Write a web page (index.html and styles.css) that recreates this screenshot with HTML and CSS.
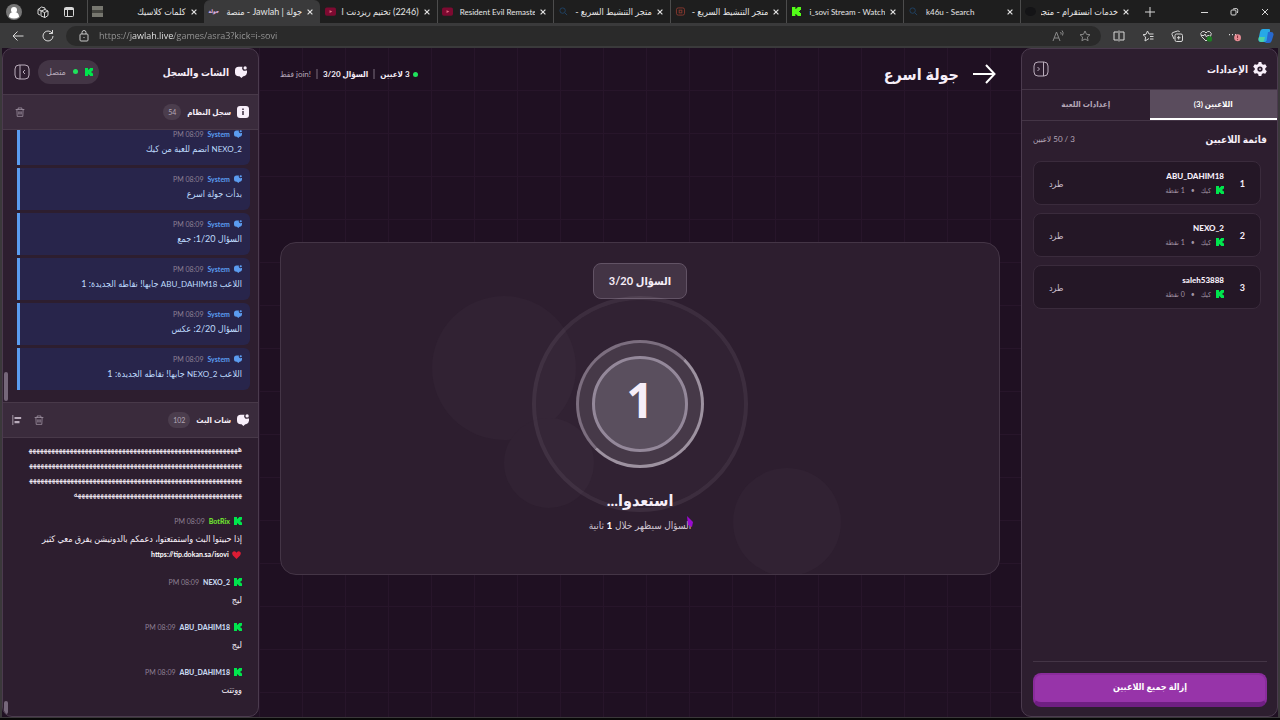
FILE: index.html
```html
<!DOCTYPE html>
<html lang="ar" dir="rtl">
<head>
    <meta charset="UTF-8" />
    <meta name="viewport" content="width=device-width, initial-scale=1.0" />
    <title>جولة | Jawlah - منصة</title>
    <link rel="stylesheet" href="styles.css">
</head>
<body>

    <!-- Shared icons -->
    <svg class="sprite" aria-hidden="true">
        <symbol id="kick" viewBox="0 0 9 9">
            <path d="M0 0h3.400v2h1V1h1V0H9v3H8v1H7v1h1v1h1v3H5.400V8h-1V7h-1v2H0z" />
        </symbol>
        <symbol id="bubble" viewBox="0 0 16 16">
            <path d="M5 1h5a3.500 3.500 0 0 0 4.500 5H16v3a5 5 0 0 1-4 4.500h-1L8.500 16 6 13.500H5a5 5 0 0 1-5-5V6a5 5 0 0 1 5-5z" />
            <circle cx="13.500" cy="2.500" r="2.200" />
        </symbol>
        <symbol id="trash" viewBox="0 0 16 16">
            <path d="M1 4h14M5 4V1.500h6V4M3 4l.5 11h9L13 4M6 7v5M8 7v5M10 7v5" />
        </symbol>
        <symbol id="close" viewBox="0 0 10 10">
            <path d="M1 1l8 8M9 1l-8 8" />
        </symbol>
        <symbol id="search" viewBox="0 0 10 10">
            <circle cx="4" cy="4" r="3" />
            <path d="M6.500 6.500L9 9" />
        </symbol>
        <symbol id="youtube" viewBox="0 0 12 9">
            <rect width="12" height="9" rx="2" fill="#7d0a31" />
            <path d="M5 3l3 1.500L5 6z" fill="#e06a80" />
        </symbol>
    </svg>

    <header class="browser" dir="ltr">
        <div class="tab-strip">
            <div class="strip-tools">
                <button class="avatar" aria-label="Profile"><svg viewBox="0 0 16 16"><circle cx="8" cy="8" r="8" fill="#777" /><circle cx="8" cy="6" r="3" fill="#fff" /><path d="M3 13q0-5 5-5t5 5q-5 3-10 0z" fill="#fff" /></svg></button>
                <button class="line-icon" aria-label="Workspaces"><svg viewBox="0 0 12 12"><path d="M1 3.500L4.500 1 8 2v2M1 3.500V8l2 1M1 3.500l3 1M4 5l4-1.500L11 5v4.500L8 11.500 4 10zM4 5l3.500 1.500L11 5M7.500 6.500v5" /></svg></button>
                <button class="line-icon" aria-label="Tab actions"><svg viewBox="0 0 12 12"><rect x="1.500" y="1.500" width="9" height="9" rx="1" /><path d="M1.500 3h9" stroke-width="2" /><path d="M4.500 3v7" /></svg></button>
            </div>
            <div class="tabs">
                <div class="tab"><span class="favicon gray-page"></span><span class="tab-title" dir="rtl">كلمات كلاسيك</span><button class="tab-close" aria-label="Close"><svg><use href="#close" /></svg></button></div>
                <div class="tab active"><span class="favicon word-mark">جولة</span><span class="tab-title" dir="rtl">جولة | Jawlah - منصة</span><button class="tab-close" aria-label="Close"><svg><use href="#close" /></svg></button></div>
                <div class="tab no-line"><svg class="favicon"><use href="#youtube" /></svg><span class="tab-title" dir="rtl">(2246) تختيم ريزدنت اي</span><button class="tab-close" aria-label="Close"><svg><use href="#close" /></svg></button></div>
                <div class="tab"><svg class="favicon"><use href="#youtube" /></svg><span class="tab-title latin">Resident Evil Remaste</span><button class="tab-close" aria-label="Close"><svg><use href="#close" /></svg></button></div>
                <div class="tab"><svg class="favicon lens"><use href="#search" /></svg><span class="tab-title" dir="rtl">متجر التنشيط السريع -</span><button class="tab-close" aria-label="Close"><svg><use href="#close" /></svg></button></div>
                <div class="tab"><svg class="favicon store" viewBox="0 0 11 10"><rect x="1" y="1" width="9" height="8" rx="2" /><rect x="4" y="3.500" width="3" height="3" /></svg><span class="tab-title" dir="rtl">متجر التنشيط السريع -</span><button class="tab-close" aria-label="Close"><svg><use href="#close" /></svg></button></div>
                <div class="tab"><svg class="favicon kick-lime"><use href="#kick" /></svg><span class="tab-title latin">i_sovi Stream - Watch</span><button class="tab-close" aria-label="Close"><svg><use href="#close" /></svg></button></div>
                <div class="tab"><svg class="favicon lens"><use href="#search" /></svg><span class="tab-title latin">k46u - Search</span><button class="tab-close" aria-label="Close"><svg><use href="#close" /></svg></button></div>
                <div class="tab"><span class="favicon dark-page"></span><span class="tab-title" dir="rtl">خدمات انستقرام - متجر</span><button class="tab-close" aria-label="Close"><svg><use href="#close" /></svg></button></div>
            </div>
            <div class="window-tools">
                <button class="line-icon" aria-label="New tab"><svg viewBox="0 0 12 12"><path d="M6 1v10M1 6h10" /></svg></button>
                <span class="spacer"></span>
                <button class="line-icon" aria-label="Minimize"><svg viewBox="0 0 12 12"><path d="M3 6.500h7" /></svg></button>
                <button class="line-icon" aria-label="Restore"><svg viewBox="0 0 12 12"><rect x="3" y="4" width="5" height="5" rx="1" /><path d="M5 3q4-1 4.500 0T9.500 7" /></svg></button>
                <button class="line-icon" aria-label="Close window"><svg viewBox="0 0 12 12"><path d="M3 3l6 6M9 3L3 9" /></svg></button>
            </div>
        </div>

        <div class="toolbar">
            <button class="line-icon" aria-label="Back"><svg viewBox="0 0 12 12"><path d="M11.500 6H1M5.500 1.500L1 6l4.500 4.500" /></svg></button>
            <button class="line-icon" aria-label="Refresh"><svg viewBox="0 0 12 12"><path d="M11 6a5 5 0 1 1-2-4l1.500 1.500M10.500 0v3.500H7" /></svg></button>
            <div class="address">
                <svg class="lock" viewBox="0 0 12 12"><rect x="2" y="4" width="8" height="7" rx="1" /><path d="M4 4V2.500a2 2 0 0 1 4 0V4M6 7v1" /></svg>
                <input class="url" type="text" aria-label="Address" value="https://jawlah.live/games/asra3?kick=i-sovi" />
                <button class="line-icon dim" aria-label="Read aloud"><svg viewBox="0 0 12 12"><path d="M1 11l3.500-9L8 11M2.200 8h4.600M8.500 2q1 1 .5 2.500M10 .5q2 2 .5 5" /></svg></button>
                <button class="line-icon dim" aria-label="Add to favorites"><svg viewBox="0 0 12 12"><path d="M6 1l1.500 3.300 3.500.4-2.600 2.400.7 3.600L6 9l-3.100 1.700.7-3.600L1 4.700l3.500-.4z" /></svg></button>
            </div>
            <div class="toolbar-icons">
                <button class="line-icon" aria-label="Split screen"><svg viewBox="0 0 12 12"><path d="M5 2H1v8h4M7 2h4v8H7M6 .5v11" /></svg></button>
                <button class="line-icon" aria-label="Favorites"><svg viewBox="0 0 12 12"><path d="M7 8.500L3 11l.6-4L1 4.700l3-.4L5.500 1 7 4h4.500M8 6.500h3.500M8 9h3.500" /></svg></button>
                <button class="line-icon" aria-label="Collections"><svg viewBox="0 0 12 12"><rect x="4" y="4" width="7.500" height="7.500" rx="1.500" /><path d="M3 9L1 4.500Q.5 3 2 2.500L6.500 1Q8 .5 8.500 2M7.700 6v3.500M6 7.700h3.500" /></svg></button>
                <button class="line-icon" aria-label="Browser essentials"><svg viewBox="0 0 12 12"><path d="M6 11L1.500 6.500Q-.5 3 2.500 1.500 5 1 6 3q1-2 3.500-1.500 3 1.500 1 5zM1 5.500h3l1-1.500 1.500 3 1-1.500h2" /><circle cx="9.500" cy="9" r="2.800" fill="#1d7d22" stroke="none" /></svg></button>
                <button class="line-icon" aria-label="Settings and more"><svg viewBox="0 0 14 12"><path d="M0 4.500h1.200M3.500 4.500h1.200M7 4.500h1.200" stroke-width="1.500" /><circle cx="10" cy="8" r="4" fill="#e58b93" stroke="none" /><path d="M10 5.500v3M10 9.500v1" stroke="#701c28" /></svg></button>
                <button class="copilot" aria-label="Copilot"><svg viewBox="0 0 16 16"><path d="M5 1h6q1.500 0 1 2L10 11q-.7 3-3 3H3q-3 0-2.500-3L2 4q.7-3 3-3z" fill="#27a9e6" /><path d="M10 4h3q3 0 2.500 3L14 12q-.7 3-3 3H6q2 0 2.500-2z" fill="#2769cf" /><path d="M1 9h6l-1 4q-.5 1-2 1Q.5 14 .5 11z" fill="#4fd2a0" /></svg></button>
            </div>
        </div>
    </header>

    <div class="app">
        <!-- Settings panel -->
        <aside class="panel settings">
            <div class="settings-head">
                <svg class="gear" viewBox="0 0 16 16"><path fill-rule="evenodd" d="M6.500 0h3l.6 2.300 1.600.9L14 2.500l1.800 2.800L14 7.100v1.800l1.800 1.800-1.800 2.800-2.300-.7-1.600.9-.6 2.300h-3l-.6-2.300-1.600-.9-2.300.7-1.800-2.800L2 8.900V7.100L.2 5.300 2 2.500l2.300.7 1.600-.9zM8 5a3 3 0 1 0 0 6 3 3 0 0 0 0-6z" /><circle cx="8" cy="8" r="1" /></svg>
                <h2>الإعدادات</h2>
                <button class="collapse" aria-label="طي الإعدادات"><svg viewBox="0 0 16 16"><rect x="1" y="1" width="14" height="14" rx="4" /><path d="M10.500 1v14M4.500 6l2 2-2 2" /></svg></button>
            </div>
            <div class="settings-tabs">
                <button class="settings-tab selected">اللاعبين (3)</button>
                <button class="settings-tab">إعدادات اللعبة</button>
            </div>
            <div class="players">
                <div class="players-head">
                    <h3>قائمة اللاعبين</h3>
                    <span>3 / 50 لاعبين</span>
                </div>
                <ul class="player-list">
                    <li class="player">
                        <b class="rank">1</b>
                        <div class="player-info">
                            <strong>ABU_DAHIM18</strong>
                            <small><svg class="kick"><use href="#kick" /></svg>كيك<i>•</i>1 نقطة</small>
                        </div>
                        <button class="kick-out">طرد</button>
                    </li>
                    <li class="player">
                        <b class="rank">2</b>
                        <div class="player-info">
                            <strong>NEXO_2</strong>
                            <small><svg class="kick"><use href="#kick" /></svg>كيك<i>•</i>1 نقطة</small>
                        </div>
                        <button class="kick-out">طرد</button>
                    </li>
                    <li class="player">
                        <b class="rank">3</b>
                        <div class="player-info">
                            <strong>saleh53888</strong>
                            <small><svg class="kick"><use href="#kick" /></svg>كيك<i>•</i>0 نقطة</small>
                        </div>
                        <button class="kick-out">طرد</button>
                    </li>
                </ul>
            </div>
            <div class="settings-foot">
                <button class="remove-all">إزالة جميع اللاعبين</button>
            </div>
        </aside>

        <!-- Game -->
        <main class="game">
            <div class="game-head">
                <button class="back" aria-label="رجوع"><svg viewBox="0 0 24 20"><path d="M1 10h21M14 1l8.500 9-8.500 9" /></svg></button>
                <h1>جولة اسرع</h1>
                <div class="status">
                    <span class="dot"></span>
                    <b>3 لاعبين</b>
                    <span class="bar"></span>
                    <b>السؤال 3/20</b>
                    <span class="bar"></span>
                    <span class="join"><bdi>join!</bdi> فقط</span>
                </div>
            </div>
            <div class="stage">
                <section class="round-card">
                    <span class="blob blob-large"></span>
                    <span class="blob blob-small"></span>
                    <span class="blob blob-right"></span>
                    <div class="question-no">السؤال 3/20</div>
                    <div class="countdown">
                        <div class="count">1</div>
                    </div>
                    <h2>استعدوا...</h2>
                    <p>السؤال سيظهر خلال <b>1</b> ثانية<svg class="pointer" viewBox="0 0 8 12"><path d="M1 0l6 6-1 5-4-2z" /></svg></p>
                </section>
            </div>
        </main>

        <!-- Chat and log panel -->
        <aside class="panel chat-panel">
            <div class="chat-head">
                <svg class="bubble"><use href="#bubble" /></svg>
                <h2>الشات والسجل</h2>
                <span class="connected"><svg class="kick"><use href="#kick" /></svg><span class="dot"></span>متصل</span>
                <button class="collapse" aria-label="طي الشات"><svg viewBox="0 0 16 16"><rect x="1" y="1" width="14" height="14" rx="4" /><path d="M6 1v14M11 6L9 8l2 2" /></svg></button>
            </div>

            <div class="section-bar">
                <svg class="info" viewBox="0 0 12 12"><rect width="12" height="12" rx="3" fill="#f8effa" /><path d="M6 5v4M6 2.500V4" stroke="#3a2b3c" stroke-width="1.500" /></svg>
                <h3>سجل النظام</h3>
                <span class="badge">54</span>
                <button class="tool" aria-label="مسح السجل"><svg><use href="#trash" /></svg></button>
            </div>
            <div class="feed log">
                <div class="log-item">
                    <div class="meta"><svg class="bubble"><use href="#bubble" /></svg><b>System</b><time>08:09 PM</time></div>
                    <p><bdi>NEXO_2</bdi> انضم للعبة من كيك</p>
                </div>
                <div class="log-item">
                    <div class="meta"><svg class="bubble"><use href="#bubble" /></svg><b>System</b><time>08:09 PM</time></div>
                    <p>بدأت جولة اسرع</p>
                </div>
                <div class="log-item">
                    <div class="meta"><svg class="bubble"><use href="#bubble" /></svg><b>System</b><time>08:09 PM</time></div>
                    <p>السؤال 1/20: جمع</p>
                </div>
                <div class="log-item">
                    <div class="meta"><svg class="bubble"><use href="#bubble" /></svg><b>System</b><time>08:09 PM</time></div>
                    <p>اللاعب <bdi>ABU_DAHIM18</bdi> جابها! نقاطه الجديدة: 1</p>
                </div>
                <div class="log-item">
                    <div class="meta"><svg class="bubble"><use href="#bubble" /></svg><b>System</b><time>08:09 PM</time></div>
                    <p>السؤال 2/20: عكس</p>
                </div>
                <div class="log-item">
                    <div class="meta"><svg class="bubble"><use href="#bubble" /></svg><b>System</b><time>08:09 PM</time></div>
                    <p>اللاعب <bdi>NEXO_2</bdi> جابها! نقاطه الجديدة: 1</p>
                </div>
                <span class="thumb thumb-log"></span>
            </div>

            <div class="section-bar">
                <svg class="bubble"><use href="#bubble" /></svg>
                <h3>شات البث</h3>
                <span class="badge">102</span>
                <button class="tool" aria-label="مسح الشات"><svg><use href="#trash" /></svg></button>
                <button class="tool" aria-label="محاذاة"><svg viewBox="0 0 12 12"><path d="M1 0v12" /><path d="M3 3.500h8M3 8.500h6" stroke-width="2.500" /></svg></button>
            </div>
            <div class="feed chat">
                <div class="chat-item">
                    <p>ههههههههههههههههههههههههههههههههههههههههههههههههههههههههه&zwj;<br>&zwj;ههههههههههههههههههههههههههههههههههههههههههههههههههههههههه&zwj;<br>&zwj;ههههههههههههههههههههههههههههههههههههههههههههههههههههههههه&zwj;<br>&zwj;ههههههههههههههههههههههههههههههههههههههههههههه</p>
                </div>
                <div class="chat-item">
                    <div class="meta"><svg class="kick"><use href="#kick" /></svg><b class="bot">BotRix</b><time>08:09 PM</time></div>
                    <p>إذا حبيتوا البث واستمتعتوا، دعمكم بالدونيشن يفرق معي كثير<br><svg class="heart" viewBox="0 0 10 9"><path d="M5 9L1 5Q-1 2 1.500.5 4-.5 5 2 6-.5 8.500.5 11 2 9 5z" /></svg> <a href="https://tip.dokan.sa/isovi">https://tip.dokan.sa/isovi</a></p>
                </div>
                <div class="chat-item">
                    <div class="meta"><svg class="kick"><use href="#kick" /></svg><b>NEXO_2</b><time>08:09 PM</time></div>
                    <p>ليج</p>
                </div>
                <div class="chat-item">
                    <div class="meta"><svg class="kick"><use href="#kick" /></svg><b>ABU_DAHIM18</b><time>08:09 PM</time></div>
                    <p>ليج</p>
                </div>
                <div class="chat-item">
                    <div class="meta"><svg class="kick"><use href="#kick" /></svg><b>ABU_DAHIM18</b><time>08:09 PM</time></div>
                    <p>ووتتت</p>
                </div>
                <span class="thumb thumb-chat"></span>
            </div>
        </aside>
    </div>

</body>
</html>
```
FILE: styles.css
```css
* {
    box-sizing: border-box;
}

body {
    margin: 0;
    height: 100vh;
    display: flex;
    flex-direction: column;
    overflow: hidden;
    background: #3a383a;
    border-bottom: 2px solid #080808;
    color: #f6eef8;
    font-family: Lato, "DejaVu Sans Condensed", "DejaVu Sans", sans-serif;
    font-size: 8px;
}

h1, h2, h3, p, ul {
    margin: 0;
    padding: 0;
}

button {
    padding: 0;
    border: none;
    background: none;
    color: inherit;
    font: inherit;
    cursor: pointer;
}

svg {
    display: block;
    flex: none;
}

.sprite {
    position: absolute;
    width: 0;
    height: 0;
}

/* Browser bars */
.browser {
    flex: none;
    background: #3a3a3b;
}

.tab-strip {
    display: flex;
    height: 23px;
    background: #1e1e1e;
}

.strip-tools {
    display: flex;
    align-items: center;
    justify-content: space-between;
    width: 87px;
    padding: 0 12px 0 6px;
}

.avatar svg {
    width: 16px;
    height: 16px;
}

.line-icon svg {
    width: 12px;
    height: 12px;
    fill: none;
    stroke: #d8d8d8;
    stroke-width: 1;
}

.tabs {
    flex: 1;
    display: flex;
    min-width: 0;
}

.tab {
    flex: 1;
    min-width: 0;
    display: flex;
    align-items: center;
    gap: 5px;
    padding: 0 7px 0 4px;
    border-left: 1px solid #4c4c4c;
    font-size: 9px;
    color: #e6e6e6;
}

.tab.active {
    background: #3a3a3b;
    border-color: #3a3a3b;
    border-radius: 6px 6px 0 0;
}

.tab.no-line {
    border-color: transparent;
}

.tab-title {
    flex: 1;
    min-width: 0;
    overflow: hidden;
    white-space: nowrap;
}

.tab-title.latin {
    padding-left: 2px;
    font-size: 8px;
}

.favicon {
    flex: none;
    width: 11px;
    height: 9px;
}

.gray-page {
    height: 11px;
    background: linear-gradient(#77776f 40%, #44443f 40% 60%, #77776f 60%);
}

.dark-page {
    border-radius: 50%;
    background: #141416;
}

.word-mark {
    font-size: 5px;
    font-weight: bold;
    line-height: 9px;
    white-space: nowrap;
    color: #e5b9ee;
}

.lens {
    fill: none;
    stroke: #1f4468;
}

.store {
    fill: none;
    stroke: #8c3a30;
}

.kick-lime {
    fill: #53fc18;
}

.tab-close svg {
    width: 6px;
    height: 6px;
    stroke: #e0e0e0;
    stroke-width: 2;
}

.window-tools {
    display: flex;
    align-items: center;
    justify-content: space-between;
    width: 144px;
    padding: 0 9px 0 8px;
}

.window-tools .spacer {
    width: 4px;
}

.toolbar {
    display: flex;
    align-items: center;
    height: 25px;
    padding: 0 6px 0 12px;
}

.toolbar > .line-icon {
    width: 12px;
    margin-right: 18px;
}

.toolbar > .line-icon + .line-icon {
    margin-right: 12px;
}

.address {
    flex: 1;
    display: flex;
    align-items: center;
    gap: 15px;
    height: 20px;
    padding: 0 10px 0 12px;
    border-radius: 10px;
    background: #2a2a2a;
}

.lock {
    width: 12px;
    height: 12px;
    margin-right: -6px;
    fill: none;
    stroke: #c8c8c8;
}

/* host part of the address is brighter than the rest */
.url {
    flex: 1;
    min-width: 0;
    padding: 0;
    border: none;
    outline: none;
    font-family: "Open Sans", sans-serif;
    font-size: 9px;
    line-height: 16px;
    background: linear-gradient(to right, #9a9a9a 32px, #f0f0f0 32px 75px, #9a9a9a 75px);
    -webkit-background-clip: text;
    background-clip: text;
    -webkit-text-fill-color: transparent;
}

.dim svg {
    stroke: #8a8a8a;
}

.toolbar-icons {
    display: flex;
    align-items: center;
    justify-content: space-between;
    width: 173px;
    padding-left: 12px;
}

.copilot svg {
    width: 16px;
    height: 16px;
}

/* App */
.app {
    flex: 1;
    min-height: 0;
    display: grid;
    grid-template-columns: 257px 1fr 257px;
    margin: 0 2px 1px;
    background-color: #1f1022;
    background-image:
        linear-gradient(to right, #27152a 1px, transparent 1px),
        linear-gradient(#27152a 1px, transparent 1px);
    background-size: 43px 43px;
    background-position: 42px 42px;
}

.panel {
    display: flex;
    flex-direction: column;
    min-height: 0;
    border: 1px solid #4b3b4e;
    border-radius: 10px;
    background: #2d1e2f;
    overflow: hidden;
}

.panel h2 {
    font-size: 10px;
}

.panel h3 {
    font-size: 8px;
}

.kick {
    width: 8px;
    height: 8px;
    fill: #00e54d;
}

.bubble {
    width: 12px;
    height: 12px;
    fill: #f8effa;
}

.dot {
    width: 5px;
    height: 5px;
    border-radius: 50%;
    background: #1fe25c;
}

.collapse {
    margin-inline-start: auto;
}

.collapse svg {
    width: 16px;
    height: 16px;
    fill: none;
    stroke: #b9acbb;
}

/* Settings */
.settings-head {
    display: flex;
    align-items: center;
    gap: 5px;
    height: 40px;
    padding: 0 10px 0 11px;
}

.gear {
    width: 14px;
    height: 14px;
    fill: #f8effa;
}

.settings-tabs {
    display: flex;
    border-top: 1px solid #443546;
    border-bottom: 1px solid #443546;
}

.settings-tab {
    flex: 1;
    height: 30px;
    border-bottom: 2px solid transparent;
    color: #b5a8b8;
    font-weight: bold;
}

.settings-tab.selected {
    border-color: #fff;
    background: #5a4c5d;
    color: #fff;
}

.players {
    flex: 1;
    padding: 8px 10px 0 11px;
}

.players-head {
    display: flex;
    align-items: center;
    justify-content: space-between;
    height: 20px;
}

.players-head span {
    color: #b5a8b8;
}

.panel .players-head h3 {
    font-size: 10px;
}

.player-list {
    display: flex;
    flex-direction: column;
    gap: 8px;
    margin-top: 12px;
    padding-inline-start: 6px;
    list-style: none;
}

.player {
    display: flex;
    align-items: center;
    height: 44px;
    padding: 0 15px;
    border: 1px solid #3a2b3c;
    border-radius: 8px;
    background: #241726;
}

.rank {
    width: 21px;
    font-size: 9px;
}

.player-info {
    flex: 1;
    display: flex;
    flex-direction: column;
    gap: 2px;
}

.player-info strong {
    font-size: 8px;
    font-weight: 900;
    line-height: 12px;
}

.player-info small {
    display: flex;
    align-items: center;
    gap: 5px;
    font-size: 7px;
    line-height: 12px;
    color: #a294a5;
}

.player-info i {
    margin: 0 1px;
    font-style: normal;
}

.kick-out {
    color: #cbbfcd;
    font-size: 9px;
}

.settings-foot {
    margin: 0 10px 9px 11px;
    padding-top: 11px;
    border-top: 1px solid #443546;
}

.remove-all {
    width: 100%;
    height: 34px;
    padding-bottom: 4px;
    border: 2px solid #8a2c9c;
    border-bottom: 5px solid #6f1f82;
    border-radius: 8px;
    background: #9734a9;
    color: #fff;
    font-size: 9px;
    font-weight: bold;
}

/* Game */
.game {
    display: flex;
    flex-direction: column;
    min-width: 0;
    padding: 0 21px;
}

.game-head {
    display: flex;
    align-items: center;
    height: 52px;
    padding-inline-start: 4px;
}

.back svg {
    width: 24px;
    height: 20px;
    fill: none;
    stroke: #fff;
    stroke-width: 2;
}

.game-head h1 {
    margin-inline-start: 13px;
    font-size: 16px;
}

.status {
    display: flex;
    align-items: center;
    gap: 5px;
    margin-inline-start: auto;
}

.status .bar {
    width: 2px;
    height: 10px;
    background: #4c3e4f;
}

.status .dot {
    margin-inline-end: -2px;
}

.join {
    color: #b5a8b8;
}

.stage {
    flex: 1;
    display: flex;
    flex-direction: column;
    justify-content: center;
}

.round-card {
    position: relative;
    display: flex;
    flex-direction: column;
    align-items: center;
    padding: 20px 20px 41px;
    border: 1px solid #443546;
    border-radius: 16px;
    background: #2d1e2f;
    overflow: hidden;
}

.blob {
    position: absolute;
    border-radius: 50%;
    background: #312233;
}

.blob-large {
    left: 21%;
    top: 16%;
    width: 144px;
    height: 144px;
}

.blob-small {
    left: 31%;
    top: 53%;
    width: 90px;
    height: 90px;
}

.blob-right {
    left: 63%;
    top: 68%;
    width: 108px;
    height: 108px;
}

.question-no {
    position: relative;
    padding: 0 15px;
    border: 1px solid #625365;
    border-radius: 8px;
    background: #433445;
    font-size: 11px;
    font-weight: bold;
    line-height: 34px;
}

.countdown {
    position: relative;
    width: 128px;
    height: 128px;
    margin-top: 41px;
    padding: 13px;
    border: 3px solid #7a6c7d;
    border-right-color: #9c909f;
    border-bottom-color: #9c909f;
    border-radius: 50%;
    background: #433645;
}

/* outer pulse ring */
.countdown::before {
    content: "";
    position: absolute;
    inset: -47px;
    border: 4px solid rgba(255, 240, 255, 0.06);
    border-radius: 50%;
    background: rgba(255, 240, 255, 0.02);
}

.count {
    position: relative;
    height: 96px;
    border: 3px solid #94889a;
    border-radius: 50%;
    background: #5a4f5e;
    font-family: "Noto Sans", sans-serif;
    font-size: 48px;
    font-weight: bold;
    line-height: 82px;
    text-align: center;
}

.round-card h2 {
    position: relative;
    margin-top: 19px;
    font-size: 16px;
    line-height: 26px;
}

.round-card p {
    position: relative;
    margin-top: 4px;
    font-size: 10px;
    line-height: 16px;
    color: #cfc4d1;
}

.round-card p b {
    color: #fff;
}

.pointer {
    position: absolute;
    right: -3px;
    top: -1px;
    width: 8px;
    height: 12px;
    fill: #9a0bd0;
}

/* Chat and log */
.chat-head {
    display: flex;
    flex: none;
    align-items: center;
    height: 45px;
    padding: 0 11px;
}

.chat-head h2 {
    margin-inline-start: 6px;
}

.connected {
    display: flex;
    align-items: center;
    gap: 7px;
    height: 24px;
    margin-inline-start: auto;
    padding: 0 6px 0 8px;
    border-radius: 12px;
    background: #433545;
    color: #b5a8b8;
    font-size: 9px;
}

.chat-head .collapse {
    margin-inline-start: 8px;
}

.section-bar {
    display: flex;
    flex: none;
    align-items: center;
    gap: 6px;
    height: 36px;
    padding: 0 9px;
    border-top: 1px solid #483949;
    border-bottom: 1px solid #483949;
    background: #3a2b3c;
}

.info {
    width: 12px;
    height: 12px;
}

.badge {
    padding: 0 5px;
    border-radius: 8px;
    background: #4b3d4d;
    color: #b5a8b8;
    font-size: 7px;
    line-height: 16px;
}

.tool {
    margin-inline: 3px;
}

.tool + .tool {
    margin-inline-end: 0;
}

.badge + .tool {
    margin-inline-start: auto;
}

.tool svg {
    width: 10px;
    height: 10px;
    fill: none;
    stroke: #b9acbb;
}

.feed {
    position: relative;
    flex: 1 1 0;
    min-height: 0;
    display: flex;
    flex-direction: column;
    justify-content: flex-end;
    overflow: hidden;
}

.log {
    gap: 3px;
    padding: 0 8px 12px 14px;
}

.log-item {
    padding: 5px 8px 8px;
    border-left: 3px solid #5b9cf0;
    border-radius: 0 6px 6px 0;
    background: #28254b;
    color: #bfdbfe;
}

.log-item bdi {
    font-size: 8px;
}

.meta {
    display: flex;
    align-items: center;
    gap: 4px;
    height: 12px;
    margin-bottom: 4px;
    font-size: 7px;
}

.log .meta {
    margin-bottom: 1px;
}

.meta .bubble {
    width: 8px;
    height: 8px;
    fill: #5b9cf0;
}

.meta time {
    color: #8d8094;
}

.log-item b {
    color: #5b9cf0;
}

.feed p {
    font-size: 9px;
    line-height: 16px;
}

.chat {
    gap: 14px;
    padding: 0 16px 19px 25px;
}

.chat .meta b {
    font-weight: 900;
    color: #c6d6ee;
}

.chat .meta .bot {
    color: #6ee02f;
}

.chat p {
    line-height: 15px;
}

.chat a {
    color: #fff;
    font-size: 7px;
    font-weight: bold;
    text-decoration: none;
}

.heart {
    display: inline-block;
    width: 9px;
    height: 8px;
    margin: 0 1px;
    vertical-align: middle;
    fill: #dc1c34;
}

.thumb {
    position: absolute;
    left: 1px;
    width: 4px;
    border-radius: 2px;
    background: #75677a;
}

.thumb-log {
    bottom: 1px;
    height: 29px;
}

.thumb-chat {
    bottom: 2px;
    height: 13px;
}
```
